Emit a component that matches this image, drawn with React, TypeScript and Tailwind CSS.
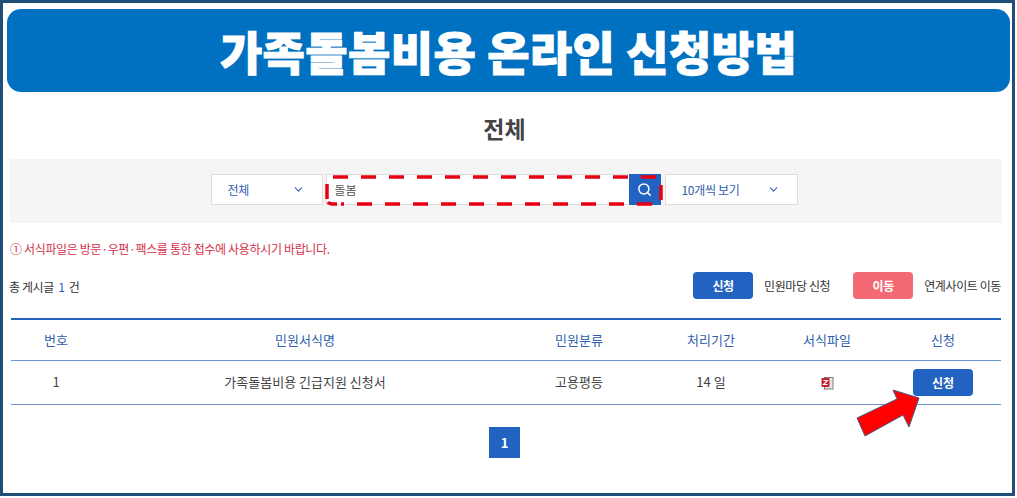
import React from 'react';
import { ChevronDown, Search } from 'lucide-react';

const font = "font-['Noto_Sans_CJK_KR','Noto_Sans',sans-serif]";

const columns = [
  { label: '번호', width: 'w-[90px]' },
  { label: '민원서식명', width: 'w-[408px]' },
  { label: '민원분류', width: 'w-[140px]' },
  { label: '처리기간', width: 'w-[124px]' },
  { label: '서식파일', width: 'w-[108px]' },
  { label: '신청', width: 'w-[120px] pl-[4px]' },
];

const SelectBox: React.FC<{ label: string; className: string }> = ({ label, className }) => (
  <div className={`flex h-[31px] items-center justify-between border border-[#dcdcdc] bg-white pl-[16px] pr-[17px] ${className}`}>
    <span className="text-[12px] tracking-[-0.3px] text-[#2f5fae]">{label}</span>
    <ChevronDown className="h-[13px] w-[13px] text-[#2f5fae]" strokeWidth={2} />
  </div>
);

const FileIcon = () => (
  <svg width="13" height="14" viewBox="0 0 13 14">
    <rect x="3.5" y="1.5" width="8.5" height="11.5" fill="#e6e6e6" stroke="#7d7d7d" />
    <rect x="0.5" y="2" width="8" height="9" rx="1" fill="#c8202c" />
    <path d="M2.5 4.5h4L2.5 8.5h4" fill="none" stroke="#ffffff" strokeWidth="1.1" />
  </svg>
);

export default function App() {
  return (
    <div className={`h-[498px] w-[1017px] overflow-hidden bg-white ${font}`}>
      <div className="relative flex h-[496px] w-[1015px] flex-col border-[3px] border-[#1f4e79] px-[4px] pt-[6px]">
        {/* Title banner */}
        <div className="flex h-[83px] w-[1003px] shrink-0 items-center justify-center rounded-[14px] bg-[#0070c0] pb-[2px]">
          <h1 className="text-[46px] leading-none font-black tracking-[0.4px] text-white [-webkit-text-stroke:1px_white]">가족돌봄비용 온라인 신청방법</h1>
        </div>

        <h2 className="mt-[20px] pr-[6px] text-center text-[23px] leading-[32px] font-bold text-[#444444]">전체</h2>

        {/* Search bar */}
        <div className="mt-[15px] ml-[3px] flex h-[64px] w-[992px] shrink-0 items-center justify-center bg-[#f5f5f5] pr-[4px] pb-[3px]">
          <SelectBox label="전체" className="w-[112px]" />
          <div className="relative ml-[3px] flex h-[31px] w-[335px] items-center border border-[#dcdcdc] bg-white pl-[8px]">
            <span className="text-[12px] text-[#555555]">돌봄</span>
            <div className="absolute top-[-1px] right-[-1px] flex h-[31px] w-[32px] items-center justify-center bg-[#2262c0]">
              <Search className="h-[15px] w-[15px] text-white" strokeWidth={2.4} />
            </div>
            {/* red dashed highlight painted over the search box */}
            <svg className="absolute top-[0px] left-[-2px] overflow-visible" width="340" height="32" viewBox="0 0 340 32">
              <path
                d="M8 2 H336 V29 H16"
                fill="none"
                stroke="#e60012"
                strokeWidth="3.5"
                strokeDasharray="15 13"
              />
              <path d="M2 9 V24 M3 27 Q4.5 29 8 29 H12" fill="none" stroke="#e60012" strokeWidth="3.5" />
            </svg>
          </div>
          <SelectBox label="10개씩 보기" className="ml-[4px] w-[133px]" />
        </div>

        <p className="mt-[17px] ml-[3px] text-[12px] leading-[18px] tracking-[-0.34px] text-[#d4314a]">① 서식파일은 방문·우편·팩스를 통한 접수에 사용하시기 바랍니다.</p>

        {/* Totals and legend */}
        <div className="mt-[14px] flex h-[27px] shrink-0 items-center justify-between pr-[7px] text-[12px] tracking-[-0.4px] text-[#333333]">
          <p className="ml-[2px] pt-[2px]">
            총 게시글 <span className="mx-[2px] text-[#2262c0]">1</span> 건
          </p>
          <div className="flex items-center">
            <span className="flex h-[27px] w-[60px] items-center justify-center rounded-[4px] bg-[#2262c0] font-bold text-white">신청</span>
            <span className="ml-[11px]">민원마당 신청</span>
            <span className="ml-[23px] flex h-[27px] w-[60px] items-center justify-center rounded-[4px] bg-[#f46a74] font-bold text-white">이동</span>
            <span className="ml-[11px]">연계사이트 이동</span>
          </div>
        </div>

        {/* Table */}
        <div className="mt-[19px] ml-[4px] w-[990px] border-t-2 border-[#2262c0]">
          <div className="flex h-[41px] items-center border-b border-[#6f97cf]">
            {columns.map((col) => (
              <div key={col.label} className={`${col.width} text-center text-[13px] text-[#2f5fae]`}>
                {col.label}
              </div>
            ))}
          </div>
          <div className="flex h-[44px] items-center border-b border-[#6f97cf] text-[13px] text-[#444444]">
            <div className="mb-[2px] w-[90px] text-center">1</div>
            <div className="mb-[2px] w-[408px] text-center">가족돌봄비용 긴급지원 신청서</div>
            <div className="mb-[2px] w-[140px] text-center">고용평등</div>
            <div className="mb-[2px] w-[124px] text-center">14 일</div>
            <div className="flex w-[108px] justify-center"><FileIcon /></div>
            <div className="flex w-[120px] justify-center pl-[4px]">
              <span className="flex h-[27px] w-[60px] items-center justify-center rounded-[4px] bg-[#2262c0] text-[12px] font-bold text-white">신청</span>
            </div>
          </div>
        </div>

        {/* Pagination */}
        <div className="mt-[22px] flex justify-center pr-[6px]">
          <span className="flex h-[31px] w-[31px] items-center justify-center bg-[#2262c0] text-[13px] font-bold text-white">1</span>
        </div>

        {/* Red arrow callout */}
        <svg className="absolute top-[385px] left-[852px]" width="70" height="52" viewBox="0 0 70 52">
          <path d="M2 30 L42 11 L38 2 L64 10 L54 39 L48 27 L10 48 Z" fill="#ff0000" stroke="#4a5a8a" strokeWidth="1" />
        </svg>
      </div>
    </div>
  );
}
